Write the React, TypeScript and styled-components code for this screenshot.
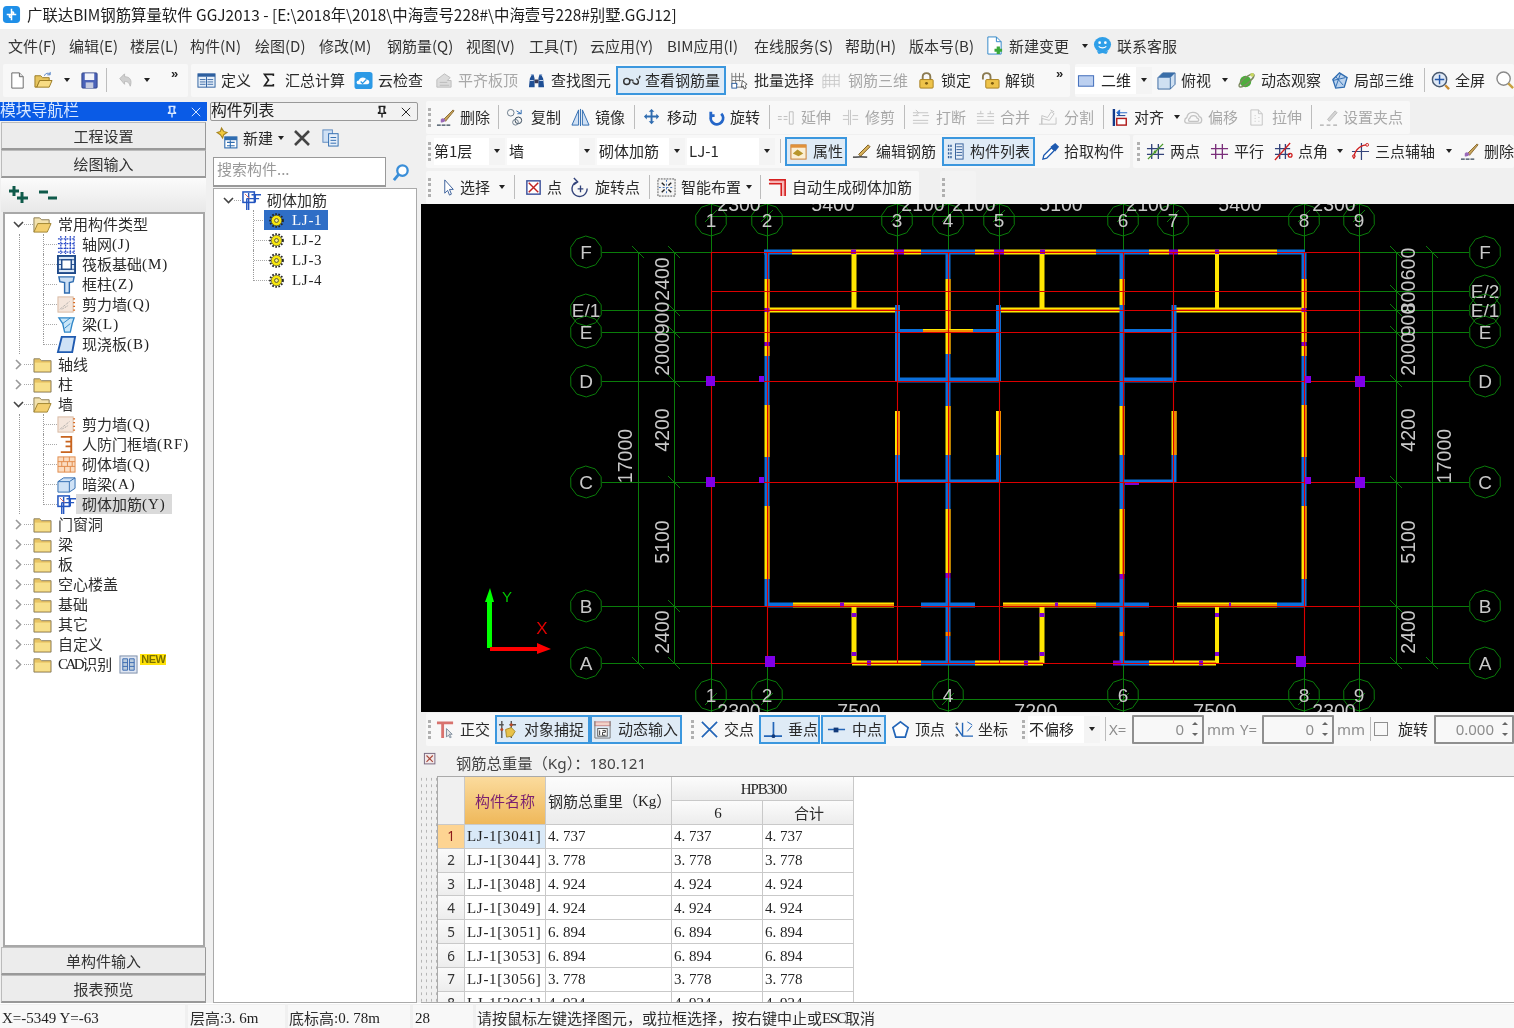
import React from "react";
import styled, { createGlobalStyle } from "styled-components";

const cjk = `"Noto Sans CJK SC", "Noto Sans", sans-serif`;
const serif = `"Liberation Serif", serif`;

const Global = createGlobalStyle`
  html, body { margin: 0; padding: 0; background: #f0f0f0; overflow: hidden; }
  #root { width: 1514px; height: 1028px; }
  * { box-sizing: border-box; }
`;

const Page = styled.div`
  width: 1514px; height: 1028px; display: flex; flex-direction: column; overflow: hidden;
  background: #f0f0f0; color: #262626; font: 15px/20px ${cjk}; filter: blur(0.35px);
`;
const TitleBar = styled.div`
  height: 29px; background: #fff; display: flex; align-items: center; padding: 0 0 1px 2px; gap: 6px;
  font-size: 15.4px; color: #1c1c1c; white-space: nowrap; flex: none;
`;
const MenuBar = styled.div`
  height: 35px; display: flex; align-items: center; padding: 0 0 2px 8px; font-size: 15px; flex: none; color: #333;
`;
const MenuItem = styled.div<{ $w: number; $g?: number }>`
  width: ${(p) => p.$w}px; white-space: nowrap; display: flex; align-items: center; flex: none; gap: ${(p) => p.$g || 0}px;
`;
const TopTools = styled.div`
  height: 37px; display: flex; flex: none; padding-left: 3px;
`;
const Block = styled.div<{ $w?: number; $ml?: number; $flat?: boolean; $grow?: boolean }>`
  height: 33px; display: flex; align-items: center; padding-bottom: 1px;
  flex: ${(p) => (p.$grow ? 1 : "none")};
  width: ${(p) => (p.$w ? `${p.$w}px` : "auto")};
  margin-left: ${(p) => p.$ml || 0}px;
  background: ${(p) => (p.$flat ? "#f3f3f3" : "#f8f8f8")};
  border-radius: 2px; overflow: hidden;
`;
const Tool = styled.div<{ $w: number; $pl?: number; $mr?: number; $on?: boolean; $off?: boolean; $g?: number }>`
  width: ${(p) => p.$w}px; height: ${(p) => (p.$on ? 29 : 28)}px; flex: none; display: flex; align-items: center;
  padding-left: ${(p) => (p.$pl || 0) - (p.$on ? 2 : 0)}px;
  margin-right: ${(p) => p.$mr || 0}px;
  gap: ${(p) => p.$g ?? 5}px; white-space: nowrap;
  color: ${(p) => (p.$off ? "#a8a8a8" : "#2a2a2a")};
  background: ${(p) => (p.$on ? "#dfebf6" : "transparent")};
  border: ${(p) => (p.$on ? "2px solid #3b97de" : "none")};
`;
const Caret = styled.i<{ $cr?: number }>`
  display: block; flex: none; width: 0; height: 0; margin-left: auto; margin-right: ${(p) => p.$cr ?? 6}px;
  border-left: 3.5px solid transparent; border-right: 3.5px solid transparent; border-top: 4px solid #222;
`;
const InlineCaret = styled.i<{ $ml?: number }>`
  display: block; flex: none; width: 0; height: 0; margin-left: ${(p) => p.$ml ?? -1}px;
  border-left: 3.5px solid transparent; border-right: 3.5px solid transparent; border-top: 4px solid #222;
`;
const Sep = styled.div<{ $ml?: number; $mr?: number }>`
  width: 1px; height: 24px; background: #bdbdbd; flex: none;
  margin-left: ${(p) => p.$ml || 0}px; margin-right: ${(p) => p.$mr ?? 7}px;
`;
const Grip = styled.div<{ $ml?: number; $mr?: number }>`
  width: 3px; height: 19px; flex: none; border-left: 3px dotted #b0b0b0;
  margin-left: ${(p) => p.$ml ?? 2}px; margin-right: ${(p) => p.$mr ?? 3}px;
`;
const More = styled.div<{ $ml: number }>`
  margin-left: ${(p) => p.$ml}px; font: bold 13px/13px "Liberation Sans", sans-serif; align-self: flex-start; margin-top: 3px; flex: none;
`;
const Combo = styled.div<{ $w: number; $mr?: number; $pl?: number; $g?: number }>`
  width: ${(p) => p.$w}px; height: 27px; background: #fff; display: flex; align-items: center; flex: none;
  padding-left: ${(p) => p.$pl ?? 1}px; gap: ${(p) => p.$g || 0}px;
  margin-right: ${(p) => p.$mr || 0}px; white-space: nowrap;
`;
const ComboBtn = styled.span`
  width: 16px; height: 27px; background: #f4f4f4; margin-left: auto; display: flex; align-items: center; justify-content: center; flex: none;
`;
const GrayText = styled.div<{ $w: number; $pl?: number }>`
  width: ${(p) => p.$w}px; padding-left: ${(p) => p.$pl || 0}px; color: #8d8d8d; flex: none; font-family: "Noto Sans", sans-serif; font-size: 15px;
`;
const PlainText = styled.div<{ $w: number }>`
  width: ${(p) => p.$w}px; flex: none;
`;
const Spin = styled.div<{ $w: number }>`
  width: ${(p) => p.$w}px; height: 29px; flex: none; border: 2px solid #8f8f8f; border-radius: 1px; background: #f8f8f8;
  display: flex; align-items: center; justify-content: flex-end; padding-right: 4px; gap: 8px; color: #8d8d8d;
  font-family: "Noto Sans", sans-serif; font-size: 15px;
`;
const Arrows = styled.span`
  display: flex; flex-direction: column; gap: 8px;
  &::before, &::after { content: ""; width: 0; height: 0; border-left: 3.5px solid transparent; border-right: 3.5px solid transparent; }
  &::before { border-bottom: 3.5px solid #666; }
  &::after { border-top: 3.5px solid #666; }
`;
const Check = styled.div`
  width: 14px; height: 14px; border: 1px solid #8f8f8f; background: #f8f8f8; flex: none; margin-right: 10px;
`;

const Main = styled.div`
  height: 902px; display: flex; flex: none;
`;
const Left = styled.div`
  width: 207px; flex: none; display: flex; flex-direction: column;
`;
const Middle = styled.div`
  width: 208px; margin-left: 3px; flex: none; display: flex; flex-direction: column;
`;
const Right = styled.div`
  width: 1093px; margin-left: 3px; flex: none; display: flex; flex-direction: column;
`;
const PanelHead = styled.div<{ $active?: boolean }>`
  height: 19px; margin-top: 1px; flex: none; display: flex; align-items: center; padding: 0 4px 3px 0; font-size: 15.8px; line-height: 16px;
  background: ${(p) => (p.$active ? "#0a5be6" : "#f2f2f2")};
  color: ${(p) => (p.$active ? "#d9e8ff" : "#222")};
  border: ${(p) => (p.$active ? "none" : "1px solid #999")};
  border-radius: ${(p) => (p.$active ? 0 : 2)}px;
`;
const HeadIcons = styled.div`
  margin-left: auto; display: flex; align-items: center; gap: 10px; margin-bottom: -3px;
`;
const NavButton = styled.div<{ $first?: boolean }>`
  height: 28px; margin: ${(p) => (p.$first ? 1 : 0)}px 1px 0 1px; flex: none; display: flex; align-items: center; justify-content: center;
  background: #ececec; border: 1px solid #bbb; border-bottom: 2px solid #999; border-right-color: #999; color: #333;
`;
const TreeTools = styled.div`
  height: 34px; flex: none; display: flex; align-items: center; gap: 9px; padding-left: 8px;
  background: linear-gradient(#fbfbfb, #e8e8e8); margin: 0 1px;
`;
const TreeBox = styled.div`
  flex: 1; margin: 0 2px 0 3px; border: 2px solid #a8a8a8; background: #fff; overflow: hidden;
`;
const Row = styled.div<{ $pl?: number }>`
  height: 20px; display: flex; align-items: center; padding-left: ${(p) => p.$pl || 0}px; white-space: nowrap; color: #2e2e2e;
`;
const ChevSlot = styled.span`
  width: 11px; height: 20px; flex: none; display: flex; align-items: center; justify-content: center;
`;
const HDots = styled.span<{ $w: number }>`
  width: ${(p) => p.$w}px; height: 1px; flex: none;
  background: repeating-linear-gradient(90deg, #aaa 0 1px, transparent 1px 2px);
`;
const Kids = styled.div<{ $ml: number; $plain?: boolean }>`
  margin-left: ${(p) => p.$ml}px; border-left: ${(p) => (p.$plain ? "none" : "1px dotted #999")};
`;
const KidRow = styled.div<{ $ml: number }>`
  height: 20px; display: flex; align-items: center; margin-left: ${(p) => p.$ml}px; white-space: nowrap; color: #2e2e2e;
`;
const Branch = styled.span<{ $w: number; $last?: boolean }>`
  width: ${(p) => p.$w}px; height: ${(p) => (p.$last ? 11 : 20)}px; align-self: flex-start; flex: none;
  border-left: 1px dotted #999;
  background: repeating-linear-gradient(90deg, #aaa 0 1px, transparent 1px 2px) 0 10px / 100% 1px no-repeat;
`;
const Label = styled.span<{ $sel?: boolean; $ml?: number }>`
  margin-left: ${(p) => (p.$sel ? 0 : p.$ml ?? 6)}px; padding: 0 ${(p) => (p.$sel ? 6 : 0)}px; display: inline-flex; align-items: center; height: 20px;
  background: ${(p) => (p.$sel ? "#dadada" : "transparent")};
`;
const Ascii = styled.span<{ $ls?: number; $light?: boolean }>`
  font-family: ${serif}; font-size: 15px; letter-spacing: ${(p) => p.$ls ?? 0}px; color: ${(p) => (p.$light ? "#fff" : "#222")};
`;
const Chip = styled.span`
  display: inline-flex; align-items: center; margin-left: 7px;
`;
const NewMark = styled.span`
  background: #ffe20a; font: bold 11px/11px "Liberation Sans", sans-serif; color: #7a7000; padding: 0 1px; margin: -9px 0 0 2px; letter-spacing: -0.5px;
`;
const ListTools = styled.div`
  height: 33px; flex: none; display: flex; align-items: center; padding-left: 6px; gap: 5px; margin-bottom: 3px;
`;
const SearchRow = styled.div`
  height: 31px; flex: none; display: flex; margin: 0 0 0 3px;
`;
const SearchInput = styled.div`
  width: 173px; height: 30px; background: #fff; border: 1px solid #999; border-bottom-width: 2px; color: #999; padding: 1px 3px; font-size: 15px; line-height: 20px;
`;
const SearchBtn = styled.div`
  flex: 1; display: flex; align-items: center; justify-content: center; padding-right: 2px;
`;
const ListBox = styled.div`
  flex: 1; margin: 0 1px 0 3px; background: #fff; border: 1px solid #aaa; padding-top: 1px; overflow: hidden;
`;
const SelBar = styled.span`
  display: flex; align-items: center; height: 20px; background: #2f6ec6; width: 64px; padding-left: 5px; gap: 8px; flex: none;
`;
const ToolRow = styled.div<{ $h: number }>`
  height: ${(p) => p.$h}px; flex: none; display: flex; padding-left: 5px;
`;
const Canvas = styled.div`
  height: 508px; flex: none; background: #000; overflow: hidden;
`;
const CanvasSvg = styled.svg`
  display: block;
`;
const Bottom = styled.div`
  height: 36px; flex: none; display: flex; padding: 1px 0 0 5px;
`;
const SumBar = styled.div`
  height: 28px; flex: none; display: flex; align-items: center; padding-top: 2px; font-size: 15.3px; font-family: "Noto Sans", "Noto Sans CJK SC", sans-serif; color: #444;
`;
const CloseBox = styled.span`
  width: 35px; flex: none; padding-left: 2px; display: flex; margin-top: -8px;
`;
const TableArea = styled.div`
  flex: 1; display: flex; min-height: 0; border-bottom: 1px solid #aaa;
`;
const Handle = styled.div`
  width: 16px; flex: none;
  background-image: radial-gradient(#b5b5b5 0.8px, transparent 1px);
  background-size: 5px 6.5px; background-position: 3px 0;
`;
const TableWrap = styled.div`
  flex: 1; background: #fff; overflow: hidden; border-top: 1px solid #aaa; border-left: 1px solid #aaa;
`;
const Sheet = styled.div`
  display: grid; grid-template-columns: 27px 81px 126px 91px 91px; grid-template-rows: 24px 24px; grid-auto-rows: 23.83px; width: 416px;
`;
const Cell = styled.div<{ $sel?: boolean }>`
  border-right: 1px solid #c9c9c9; border-bottom: 1px solid #c9c9c9; padding-left: 2px; display: flex; align-items: center;
  white-space: nowrap; overflow: hidden; min-height: 0;
  background: ${(p) => (p.$sel ? "#d9e9f8" : "#fff")};
`;
const Corner = styled(Cell)`
  grid-row: span 2; background: #f0f0f0;
`;
const NameHead = styled(Cell)`
  grid-row: span 2; justify-content: center; padding: 0; background: linear-gradient(#fbdb9d, #efb85a); color: #7a1f70;
`;
const Head = styled(Cell)<{ $rows?: number; $cols?: number; $center?: boolean }>`
  grid-row: span ${(p) => p.$rows || 1}; grid-column: span ${(p) => p.$cols || 1};
  justify-content: ${(p) => (p.$center ? "center" : "flex-start")};
  background: linear-gradient(#fcfcfc, #ececec); color: #2e2e2e;
`;
const RowNo = styled(Cell)`
  justify-content: center; padding: 0;
  background: ${(p) => (p.$sel ? "#fdd492" : "linear-gradient(#fafafa,#ededed)")};
  color: ${(p) => (p.$sel ? "#8c1a1a" : "#333")};
  font-family: "Noto Sans", sans-serif; font-size: 13.5px;
`;
const Status = styled.div`
  height: 25px; flex: none; display: flex; border-top: 1px solid #fff; padding-top: 1px; gap: 3px; overflow: hidden; background: #f0f0f0;
`;
const StatusCell = styled.div<{ $w: number; $pl?: number; $grow?: boolean }>`
  width: ${(p) => p.$w}px; flex: ${(p) => (p.$grow ? 1 : "none")}; padding: 2px 0 0 ${(p) => p.$pl ?? 2}px; background: #f8f8f8; white-space: nowrap;
  display: flex; align-items: center; color: #2e2e2e;
`;

/* ---------- icons ---------- */
const ICONS: Record<string, React.ReactNode> = {
  logo: (<><rect x="1" y="1" width="18" height="18" rx="4" fill="#1f8fe8" /><path d="M10 4v12M5 10h10M10 7c3 0 3 3 0 3M10 13c-3 0-3-3 0-3" stroke="#fff" strokeWidth="1.6" fill="none" /></>),
  new: (<><path d="M4 2h8l4 4v12H4z" fill="#fff" stroke="#666" /><path d="M12 2v4h4" fill="#ddd" stroke="#666" /></>),
  open: (<><path d="M1 17V5h6l2 2h7v3H6L3 17z" fill="#e6c45e" stroke="#9a7a22" /><path d="M3 17l3-7h13l-3 7z" fill="#f8dc84" stroke="#9a7a22" /><path d="M11 5c1-3 4-3 6-2M17 1v3h-3" stroke="#4b7cc4" fill="none" /></>),
  save: (<><rect x="2" y="2" width="16" height="16" rx="1" fill="#4a62b8" stroke="#33468a" /><rect x="5" y="2.5" width="10" height="7" fill="#f2f4fa" /><rect x="6" y="12" width="8" height="6" fill="#c5cbe0" /></>),
  undo: (<path d="M4 8l5-5v3c6 0 8 4 6 10-1-4-3-5-6-5v3z" fill="#cfcfcf" stroke="#bbb" />),
  define: (<><rect x="1" y="3" width="18" height="14" fill="#e6eff9" stroke="#2d5f9f" /><rect x="1" y="3" width="18" height="3" fill="#2d5f9f" /><path d="M3 9h6M3 11.5h6M3 14h6M11 9h6M11 11.5h6M11 14h6" stroke="#3d6ba8" /><path d="M10 6v11" stroke="#2d5f9f" /></>),
  sigma: (<path d="M14 5V3H3l5 7-5 7h11v-2" fill="none" stroke="#222" strokeWidth="2" transform="translate(-1 1) scale(.85)" />),
  cloud: (<><rect x="0.5" y="1" width="19" height="18" rx="3" fill="#2c9ae6" /><path d="M5 14c-3 0-3-4 0-4 1-4 7-4 8-1 4 0 4 5 1 5z" fill="#fff" /><path d="M7 11l2 2 4-4" stroke="#2c9ae6" strokeWidth="1.4" fill="none" /></>),
  plat: (<><path d="M3 17V9l8-6 6 4-3 3h4v7z" fill="#dcdcdc" stroke="#bdbdbd" /><path d="M6 12h8M6 15h10" stroke="#bbb" /></>),
  binoc: (<><path d="M2 17l1-9 2-4h2l1 4v9zM12 17V8l1-4h2l2 4 1 9z" fill="#1f4f95" /><path d="M8 9h4v4H8z" fill="#3b3b55" /><path d="M3 10h4M13 10h4" stroke="#cfdcf0" /><path d="M4 4h3M13 4h3" stroke="#7fa0d0" /></>),
  glasses: (<><circle cx="5" cy="11" r="3.2" fill="none" stroke="#333" strokeWidth="1.5" /><path d="M15 8c3 1 3 6 0 6-3 0-4-3-3-3M8 10c1-1 2-1 4 0M18 8l1-3" stroke="#333" strokeWidth="1.5" fill="none" /></>),
  batch: (<><path d="M2 2v15h13M2 6h12M2 10h10M2 14h6M6 2v12M10 2v9M14 2v5" stroke="#777" fill="none" /><rect x="2" y="13" width="5" height="5" fill="#fff" stroke="#2d5f9f" /><path d="M13 10l5 4-2 1 1 3-2 1-1-3-2 1z" fill="#fff" stroke="#555" /></>),
  rebar3d: (<path d="M1 6l3-3v14M8 3v14M13 3v14M18 3v14M1 6h17M1 10h17M1 14h17M4 17l-3 1V6" stroke="#c9c9c9" fill="none" />),
  lock: (<><path d="M6 9V6c0-5 8-5 8 0v3" stroke="#8a7a50" strokeWidth="2" fill="none" /><rect x="3" y="9" width="14" height="9" rx="1" fill="#eec34a" stroke="#a67e1e" /><circle cx="10" cy="13" r="1.5" fill="#7a5a10" /></>),
  unlock: (<><path d="M2 9V6c0-5 8-5 8 0v3" stroke="#8a7a50" strokeWidth="2" fill="none" /><rect x="5" y="9" width="14" height="9" rx="1" fill="#eec34a" stroke="#a67e1e" /><circle cx="12" cy="13" r="1.5" fill="#7a5a10" /></>),
  view2d: (<rect x="1.5" y="5" width="16" height="11" fill="#bcd0f0" stroke="#3a68b8" />),
  cube: (<><path d="M1 7l5-5h13v12l-5 5H1z" fill="#cfe0f2" stroke="#3a68a0" /><path d="M1 7h13l5-5H6z" fill="#3a6ea8" /><path d="M14 7v12" stroke="#3a68a0" /></>),
  orbit: (<><circle cx="9" cy="11" r="6" fill="#4cae3c" /><ellipse cx="10" cy="10" rx="10" ry="3" transform="rotate(-40 10 10)" fill="none" stroke="#7c8a60" strokeWidth="1.5" /><circle cx="16" cy="4" r="2" fill="#c8d860" /></>),
  local3d: (<><path d="M3 9l7-7 8 5-3 10-9 1z" fill="#b9d2ee" stroke="#2f6cb0" strokeWidth="1.4" /><path d="M6 6l8 9M11 3l-5 14M3 10l13-3" stroke="#2f6cb0" /></>),
  zoomfit: (<><circle cx="9" cy="9" r="7.5" fill="#dfe9f6" stroke="#4a5a70" strokeWidth="1.5" /><path d="M9 4v10M4 9h10" stroke="#2356a8" strokeWidth="1.5" /><path d="M15 15l4 4" stroke="#c88a30" strokeWidth="2.5" /></>),
  zoom: (<><circle cx="8" cy="8" r="7" fill="#fff" stroke="#8a8a8a" strokeWidth="1.5" /><path d="M13 13l5 5" stroke="#c8a040" strokeWidth="2.5" /></>),
  brush: (<><path d="M8 12L18 2l1 1L10 14z" fill="#c8a45a" stroke="#8a6a30" /><path d="M5 12c2-2 4-1 5 1-1 2-4 3-5 2z" fill="#9a6ab8" /><path d="M1 18h14" stroke="#345" strokeWidth="1.5" strokeDasharray="4 1" /></>),
  copy: (<><circle cx="5" cy="5" r="3.5" fill="none" stroke="#6a7a8a" /><circle cx="13" cy="13" r="3.5" fill="none" stroke="#345" /><circle cx="10" cy="15" r="3" fill="none" stroke="#6a7a8a" /><path d="M11 3l5 3M16 2v4h-4" stroke="#2f6cb0" fill="none" /></>),
  mirror: (<path d="M8 2v16H1zM12 2v16h7zM10 1v18" fill="#cfe0f4" stroke="#2f6cb0" />),
  move: (<path d="M9 1l3 3h-2v4h4V6l3 3-3 3v-2h-4v4h2l-3 3-3-3h2v-4H4v2L1 9l3-3v2h4V4H6z" fill="#2f6cb0" />),
  rotate: (<path d="M4 4v4h4M15 6A6.5 6.5 0 1 1 4.5 8" fill="none" stroke="#2466c8" strokeWidth="3" />),
  extend: (<path d="M1 9h4M1 12h4M7 9h4M7 12h4M13 4v13M17 4v13M13 4h4M13 17h4" stroke="#bdbdbd" fill="none" />),
  trim: (<path d="M2 8h6M2 12h6M12 8h6M12 12h6M8 2v16M10 2v16" stroke="#c4c4c4" fill="none" />),
  break: (<path d="M1 5h16M1 8h6M11 8h7M1 13h16M1 16h16M4 2l3 3-3 3" stroke="#c4c4c4" fill="none" />),
  merge: (<path d="M1 6h7M12 6h7M1 9h7M12 9h7M1 13h18M1 16h18M5 3v3M15 3v3" stroke="#c4c4c4" fill="none" />),
  split: (<path d="M1 17h18V10M4 17V8l6 2 4-6 3 2-5 7-8-2zM13 2l4 2" stroke="#c4c4c4" fill="none" />),
  align: (<><path d="M2 1v18" stroke="#123a8a" strokeWidth="2.5" /><path d="M7 5h9M5 5l3-3v6z" stroke="#2466c8" fill="#2466c8" /><rect x="5" y="11" width="10" height="7" fill="#fff" stroke="#b01a1a" strokeWidth="1.5" /><path d="M5 8h9" stroke="#123a8a" /></>),
  offset: (<path d="M3 16c-3 0-3-5 0-6 1-7 11-7 13-1 4 1 3 7 0 7zM6 14c-2 0-1-3 0-3 1-4 7-4 8 0 2 0 2 3 0 3z" fill="none" stroke="#c4c4c4" strokeWidth="1.4" />),
  stretch: (<path d="M3 2h8l4 4v12H3zM11 2v4h4M7 8h1M7 11h1M7 14h1M11 10h1M11 14h1" stroke="#c4c4c4" fill="none" />),
  setgrip: (<><path d="M9 12l8-9 2 2-8 9z" fill="#d4d4d4" stroke="#bbb" /><path d="M1 18h4M8 18h4M15 18h4" stroke="#aaa" strokeWidth="1.5" /></>),
  prop: (<><rect x="2" y="3" width="16" height="15" fill="#fbefd5" stroke="#c8782a" /><rect x="2" y="3" width="16" height="3" fill="#e0913a" /><path d="M4 12l5-4 6 4-5 3z" fill="#b8962c" /></>),
  edit: (<><path d="M7 13L17 3l2 2L9 15z" fill="#d8b25a" stroke="#7a5a20" /><path d="M1 16c3 0 7-1 15 0" stroke="#222" strokeWidth="1.4" fill="none" /></>),
  list: (<><rect x="10" y="2" width="8" height="16" fill="#e6eff9" stroke="#345f99" /><path d="M11 5h6M11 8h6M11 11h6M11 14h6" stroke="#345f99" /><path d="M2 4h4M2 8h4M2 12h4M2 16h4" stroke="#345f99" strokeWidth="2.4" strokeDasharray="1.5 1" /></>),
  dropper: (<><path d="M2 18l1-4 8-8 3 3-8 8z" fill="#fff" stroke="#1e5ab0" strokeWidth="1.4" /><path d="M10 5l5-4 4 4-4 5z" fill="#1e5ab0" /></>),
  two: (<><path d="M6 2v16M13 2v16M1 7h18M1 13h18" stroke="#33437a" strokeWidth="1.4" /><path d="M2 18L18 2" stroke="#4a9a2a" strokeWidth="1.4" /><circle cx="9.5" cy="10.5" r="1.5" fill="#4a9a2a" /></>),
  parallel: (<path d="M6 2v16M13 2v16M1 7h18M1 13h18" stroke="#7a2e7a" strokeWidth="1.4" />),
  angle: (<><path d="M6 2v16M12 2v16M1 7h16M1 13h16" stroke="#33437a" strokeWidth="1.4" /><path d="M1 19L17 1" stroke="#d02020" strokeWidth="1.4" /><circle cx="17" cy="14" r="2" fill="none" stroke="#d02020" strokeWidth="1.4" /></>),
  three: (<><path d="M11 1v18M1 10h18" stroke="#33437a" strokeWidth="1.3" /><path d="M3 18c0-8 5-14 13-15" stroke="#d02020" strokeWidth="1.3" fill="none" /><circle cx="3" cy="15" r="1.5" fill="none" stroke="#d02020" /><circle cx="17" cy="3" r="1.5" fill="none" stroke="#d02020" /></>),
  cursor: (<path d="M5 2v14l3-3 2 5 2-1-2-5h4z" fill="#fff" stroke="#3a5f9a" />),
  point: (<><rect x="3" y="3" width="14" height="14" fill="#fff" stroke="#3a4f9a" strokeWidth="1.5" /><path d="M5 5l10 10M15 5L5 15" stroke="#c02020" strokeWidth="1.5" /></>),
  rotpt: (<><path d="M6 4A8 8 0 1 0 17 11" fill="none" stroke="#33437a" strokeWidth="1.5" /><path d="M3 0l4 4-4 3" fill="none" stroke="#33437a" strokeWidth="1.5" /><path d="M10 8v7M7 11.5h6" stroke="#33437a" strokeWidth="1.4" /></>),
  smart: (<><path d="M1 1h18v18H1z" fill="#f4f4f4" stroke="#555" strokeDasharray="2 1" /><path d="M10 2v16M2 10h16" stroke="#3a6ab0" strokeDasharray="2 2" /><path d="M5 5l3 3M15 5l-3 3M5 15l3-3M15 15l-3-3" stroke="#222" strokeWidth="1.5" /></>),
  auto: (<><path d="M1 2h17v17M1 6h13v13" fill="none" stroke="#d61f1f" strokeWidth="1.8" /><path d="M2 4h14v15" fill="none" stroke="#f8b0b0" strokeWidth="1.6" /></>),
  ortho: (<><path d="M1 3h17M7 3v16" stroke="#d8736e" strokeWidth="3" /><path d="M11 9v9l2-2 2 3 1-1-2-3h3z" fill="#e8e8e8" stroke="#7a8a9a" /></>),
  snap: (<><path d="M4 1v18M14 1v18M1 5h5M12 5h7" stroke="#555" strokeWidth="1.5" /><circle cx="4" cy="10" r="1.6" fill="#b84a2a" /><circle cx="14" cy="5" r="1.6" fill="#b84a2a" /><path d="M8 10l6-2 4 4-3 5-6 1z" fill="#e8c24a" stroke="#a68a2a" /></>),
  dyn: (<><rect x="2" y="2" width="16" height="4" fill="#f2d2c8" stroke="#c88" /><path d="M2 1v18M18 1v18M2 19h16" stroke="#777" /><rect x="5" y="9" width="10" height="8" fill="#fff" stroke="#555" /><path d="M7 11v5M10 11h3v2h-3v3h3" stroke="#333" fill="none" /></>),
  cross: (<path d="M2 2l16 16M18 2L2 18" stroke="#2466b8" strokeWidth="1.8" />),
  perp: (<><path d="M1 17h19M11 2v15" stroke="#2466b8" strokeWidth="1.8" /><circle cx="11" cy="17" r="2" fill="#123a7a" /></>),
  mid: (<><path d="M1 10h18" stroke="#2466b8" strokeWidth="1.8" /><rect x="7" y="8" width="5" height="5" fill="#123a7a" /></>),
  vertex: (<path d="M10 2l8 6-3 10H5L2 8z" fill="#fff" stroke="#2466b8" strokeWidth="1.8" />),
  coord: (<><path d="M9 3v14h11M9 17L2 7" stroke="#2466b8" strokeWidth="1.5" fill="none" /><path d="M14 2l5 3M14 12l5-6" stroke="#2466b8" /><circle cx="3" cy="4" r="1" fill="none" stroke="#333" /><circle cx="3" cy="16" r="1" fill="none" stroke="#333" /></>),
  plusplus: (<path d="M5 1v10M0 6h10M13 7v11M8 13h11" stroke="#0f5a4a" strokeWidth="3" />),
  minusminus: (<path d="M1 7h9M10 13h9" stroke="#0f5a4a" strokeWidth="3" />),
  pin: (<path d="M6 2h8v2h-1v6l2 1v1H5v-1l2-1V4H6zM10 12v6" fill="none" stroke="currentColor" strokeWidth="2" />),
  close: (<path d="M4 4l12 12M16 4L4 16" stroke="currentColor" strokeWidth="1.4" />),
  newitem: (<><path d="M1 5l3-1 1-3 2 3 3 1-3 2-1 3-2-3z" fill="#f2ca3e" stroke="#a88620" /><rect x="8" y="9" width="11" height="10" fill="#fff" stroke="#2f6cb0" /><rect x="8" y="9" width="11" height="3" fill="#2f6cb0" /><path d="M10 14h7M10 17h7M13 12v7" stroke="#2f6cb0" /></>),
  del: (<path d="M3 3l14 14M17 3L3 17" stroke="#444" strokeWidth="2.6" />),
  dup: (<><rect x="2" y="2" width="10" height="13" fill="#cfe0f4" stroke="#5e8ac0" /><rect x="8" y="6" width="10" height="13" fill="#e6eff9" stroke="#2f6cb0" /><path d="M10 10h6M10 13h6M10 16h6" stroke="#2f6cb0" /></>),
  search: (<><circle cx="11" cy="8" r="5.5" fill="#fff" stroke="#3a8ed8" strokeWidth="2.4" /><path d="M7 12l-5 6" stroke="#3a8ed8" strokeWidth="3" /></>),
  folder: (<><path d="M1 4h6l2 2h10v12H1z" fill="#e8c463" stroke="#8a8060" /><path d="M2 8h16v9H2z" fill="#f7e08a" /></>),
  folderOpen: (<><path d="M1 18V3h6l2 2h8v4" fill="#f3e3b0" stroke="#8a7a50" /><path d="M1 18l4-9h14l-4 9z" fill="#f3cf6f" stroke="#a08430" /></>),
  axis: (<path d="M1 4h18M1 9h18M1 14h18M1 18h18M4 1v19M9 1v19M14 1v19M18 1v19" stroke="#2a4ac8" fill="none" strokeWidth="1.3" strokeDasharray="2 1" />),
  raft: (<><rect x="1" y="1" width="18" height="18" fill="#dce8f6" stroke="#1f4a8a" strokeWidth="2" /><rect x="5" y="5" width="10" height="10" fill="#fff" stroke="#1f4a8a" strokeWidth="1.5" /><path d="M1 5h4M1 10h4M1 15h4M15 5h4M15 10h4M15 15h4" stroke="#1f4a8a" /></>),
  col: (<path d="M2 2h16l-1 5-4 1v11H8V8L3 7z" fill="#cde0f4" stroke="#2f6cb0" strokeWidth="1.5" />),
  shear: (<><rect x="1" y="2" width="16" height="16" fill="#f4e6dc" stroke="#d8b8a0" /><path d="M3 15l10-8M5 15l7-4" stroke="#9a9a9a" strokeDasharray="1 1" /><path d="M17 4h2M17 8h2M17 12h2M17 16h2" stroke="#d86a20" strokeWidth="1.4" /></>),
  beam: (<><path d="M2 3h16l-2 6-2 9H8L6 9z" fill="#c8e6f8" stroke="#2f86c8" strokeWidth="1.4" /><path d="M6 9l8-6M8 14l6-5" stroke="#2f86c8" /></>),
  slab: (<path d="M5 2h14l-3 16H1z" fill="#cfe2f6" stroke="#1f5ab0" strokeWidth="2" />),
  door: (<path d="M4 2h11v16H4M15 7H9M15 12H9" fill="#fff" stroke="#c8641e" strokeWidth="2" />),
  brick: (<><rect x="1" y="2" width="18" height="16" fill="#fbdcc0" stroke="#e08a4a" /><path d="M1 7h18M1 12h18M7 2v5M13 2v5M5 7v5M11 7v5M16 7v5M8 12v6M14 12v6" stroke="#e08a4a" /></>),
  hbeam: (<><path d="M1 7l6-4h12v11l-6 4H1z" fill="#cfe2f6" stroke="#2f6cb0" /><path d="M1 7h12l6-4M13 7v11" fill="none" stroke="#2f6cb0" /></>),
  rebar: (<><rect x="1" y="1" width="12" height="11" fill="#fff" stroke="#2456c0" strokeWidth="1.6" /><path d="M10 4h10M5 8h13M7 2v18M14 4v8M5 20V8" stroke="#2456c0" strokeWidth="1.5" /><path d="M3 3l5 5" stroke="#d06060" /></>),
  gear: (<><circle cx="10" cy="10" r="8.6" fill="none" stroke="#222" strokeWidth="2.4" strokeDasharray="2.2 2" /><circle cx="10" cy="10" r="7" fill="#f6e60e" stroke="#3a3a10" strokeWidth="0.8" /><circle cx="10" cy="10" r="2.6" fill="#f8f080" stroke="#333" /></>),
  cadbox: (<><rect x="1" y="1" width="18" height="18" fill="#dfe6f2" stroke="#7a8ca8" /><path d="M4 4h5v12H4zM11 4h5v12h-5zM4 8h5M4 12h5M11 8h5M11 12h5" fill="#bcd" stroke="#3a6ab0" /></>),
  doc: (<><path d="M3 1h9l5 5v13H3z" fill="#fff" stroke="#2f86c8" /><path d="M12 1v5h5" fill="none" stroke="#2f86c8" /><path d="M14 11v8M10 15h8" stroke="#3aa83a" strokeWidth="3.4" /></>),
  service: (<><ellipse cx="10" cy="9" rx="9" ry="8" fill="#2f9fe8" /><path d="M4 16l2 3 4-1 4 1 2-3" fill="#2f9fe8" /><circle cx="7" cy="7" r="1.4" fill="#fff" /><circle cx="13" cy="7" r="1.4" fill="#fff" /><path d="M6 11c2 2 6 2 8 0" stroke="#fff" strokeWidth="1.2" fill="none" /></>),
  xclose: (<><rect x="2" y="2" width="15" height="15" fill="#f3e9ea" stroke="#7a6a80" strokeWidth="1.4" /><path d="M5 5l9 9M14 5l-9 9" stroke="#a8483a" strokeWidth="1.6" /></>),
};

const Glyph = styled.svg`
  display: block; flex: none; overflow: visible;
`;
const Ic = ({ n, s = 19 }: { n: string; s?: number }) => (
  <Glyph width={s} height={s} viewBox="0 0 20 20">{ICONS[n]}</Glyph>
);

type T = { i?: string; t?: string; w: number; pl?: number; mr?: number; on?: boolean; off?: boolean; g?: number; c?: boolean; cr?: number };
const Tools = ({ items }: { items: T[] }) => (
  <>
    {items.map((x, k) => (
      <Tool key={k} $w={x.w} $pl={x.pl} $mr={x.mr} $on={x.on} $off={x.off} $g={x.g}>
        {x.i && <Ic n={x.i} />}
        {x.t && <span>{x.t}</span>}
        {x.c && <Caret $cr={x.cr} />}
      </Tool>
    ))}
  </>
);
const Pick = ({ t, w, mr, pl }: { t: string; w: number; mr?: number; pl?: number }) => (
  <Combo $w={w} $mr={mr} $pl={pl}>
    {t}
    <ComboBtn><InlineCaret /></ComboBtn>
  </Combo>
);

/* ---------- drawing ---------- */
const AX = [711, 767, 897, 948, 999, 1123, 1173, 1304, 1359];
const HY = [252, 291, 310, 332, 381, 482, 606, 663];
const GREEN = "#0a7c0a";
const RED = "#dc0000";
const GREY = "#c9c9c9";
const BLUE = "#0b70dc";
const YEL = "#ffe600";
const PUR = "#8200d0";
const sans = '"Liberation Sans", sans-serif';

const Bubble = ({ x, y, t }: { x: number; y: number; t: string }) => {
  const pts = Array.from({ length: 10 }, (_, i) => {
    const a = (Math.PI * 2 * i) / 10 + 0.3;
    return `${x + 16 * Math.cos(a)},${y + 16 * Math.sin(a)}`;
  }).join(" ");
  return (
    <>
      <polygon points={pts} fill="none" stroke={GREEN} />
      <text x={x} y={y + 7} fontFamily={sans} fontSize={19} fill={GREY} textAnchor="middle">{t}</text>
    </>
  );
};
const Dim = ({ x, y, t }: { x: number; y: number; t: string }) => (
  <text transform={`rotate(-90 ${x} ${y})`} x={x} y={y + 7} fontFamily={sans} fontSize="19.5" fill={GREY} textAnchor="middle">{t}</text>
);
const Top = ({ x, y, t }: { x: number; y: number; t: string }) => (
  <text x={x} y={y} fontFamily={sans} fontSize="19.5" fill={GREY} textAnchor="middle">{t}</text>
);
const Tick = ({ x, y, up }: { x: number; y: number; up?: boolean }) => (
  <line x1={x - 6} y1={up ? y + 6 : y - 6} x2={x + 6} y2={up ? y - 6 : y + 6} stroke={GREEN} />
);

type S = [number, number, string];
const wallH = (y: number, segs: S[], w = 5) =>
  segs.map(([a, b, c], i) => (
    <g key={`h${y}${i}${a}`}>
      <rect x={a} y={y - w / 2} width={b - a} height={w} fill={c} />
      {c === YEL && <rect x={a} y={y - 1} width={b - a} height={2} fill="#f08c00" />}
    </g>
  ));
const wallV = (x: number, segs: S[], w = 5, core = true) =>
  segs.map(([a, b, c], i) => (
    <g key={`v${x}${i}${a}`}>
      <rect x={x - w / 2} y={a} width={w} height={b - a} fill={c} />
      {core && c === YEL && <rect x={x} y={a} width={w / 2} height={b - a} fill="#f08c00" />}
    </g>
  ));

const mainWall = (): S[] => [[252, 279, BLUE], [279, 308, YEL], [308, 312, PUR], [312, 342, YEL], [342, 346, PUR], [346, 356, YEL], [356, 405, BLUE], [405, 457, YEL], [457, 506, BLUE], [506, 579, YEL], [579, 606, BLUE]];
const midWall = (): S[] => [[252, 279, BLUE], [279, 354, YEL], [354, 406, BLUE], [406, 455, YEL], [455, 509, BLUE], [509, 573, YEL], [573, 578, PUR], [578, 632, BLUE], [632, 636, "#f08c00"], [636, 663, BLUE]];
const midWall2 = (): S[] => [[252, 279, BLUE], [279, 305, YEL], [305, 406, BLUE], [406, 455, YEL], [455, 509, BLUE], [509, 574, YEL], [574, 579, PUR], [579, 632, BLUE], [632, 636, "#f08c00"], [636, 663, BLUE]];
const SQ: [number, number, number][] = [[706, 376, 9], [759, 376, 5], [706, 477, 9], [759, 477, 5], [1305, 376, 6], [1355, 376, 10], [1305, 477, 6], [1355, 477, 10], [765, 656, 10], [1296, 656, 10]];

const Plan = () => (
  <CanvasSvg width={1093} height={508} viewBox="421 204 1093 508">
    <g stroke={GREEN} fill="none">
      {AX.map((x) => <line key={x} x1={x + 0.5} y1={204} x2={x + 0.5} y2={252} />)}
      {[711, 767, 948, 1123, 1304, 1359].map((x) => <line key={x} x1={x + 0.5} y1={663} x2={x + 0.5} y2={712} />)}
      <line x1={711} y1={216.5} x2={1359} y2={216.5} />
      <line x1={711} y1={699.5} x2={1359} y2={699.5} />
      {[252, 310, 332, 381, 482, 606, 663].map((y) => <line key={y} x1={602} y1={y + 0.5} x2={711} y2={y + 0.5} />)}
      {HY.map((y) => <line key={y} x1={1359} y1={y + 0.5} x2={1469} y2={y + 0.5} />)}
      {[638, 674, 1396, 1432].map((x) => <line key={x} x1={x + 0.5} y1={252} x2={x + 0.5} y2={663} />)}
    </g>
    {[252, 663].map((y) => <Tick key={y} x={638} y={y} />)}
    {[252, 310, 332, 381, 482, 606, 663].map((y) => <Tick key={y} x={674} y={y} />)}
    {HY.map((y) => <Tick key={y} x={1396} y={y} />)}
    {[252, 663].map((y) => <Tick key={y} x={1432} y={y} />)}
    {AX.map((x) => <Tick key={x} x={x} y={216} up />)}
    {[711, 767, 948, 1123, 1304, 1359].map((x) => <Tick key={x} x={x} y={699} up />)}

    {wallH(252, [[764, 792, BLUE], [792, 894, YEL], [851, 856, PUR], [894, 904, PUR], [904, 921, YEL], [921, 975, BLUE], [975, 994, YEL], [994, 1004, PUR], [1004, 1096, YEL], [1040, 1045, PUR], [1096, 1149, BLUE], [1149, 1169, YEL], [1169, 1178, PUR], [1178, 1277, YEL], [1215, 1219, PUR], [1277, 1305, BLUE]])}
    {wallV(854, [[254, 308, YEL]], 5, false)}
    {wallV(1042, [[254, 308, YEL]], 5, false)}
    {wallV(1217, [[254, 308, YEL]], 4, false)}
    {wallH(310, [[769, 895, YEL], [1001, 1120, YEL], [1176, 1304, YEL]])}
    {wallV(767, mainWall())}
    {wallV(1304, mainWall())}
    {wallV(948, midWall())}
    {wallV(1122, midWall2())}
    {wallV(897.5, [[305, 381, BLUE], [411, 455, YEL], [455, 482, BLUE]])}
    {wallV(998.5, [[305, 381, BLUE], [411, 455, YEL], [455, 482, BLUE]])}
    {wallV(1174, [[305, 381, BLUE], [411, 455, YEL], [455, 482, BLUE]])}
    {wallH(331, [[897, 923, BLUE], [923, 973, YEL], [973, 999, BLUE], [1122, 1174, BLUE]], 4)}
    {wallH(380, [[897, 999, BLUE], [1122, 1176, BLUE]])}
    {wallH(481, [[897, 999, BLUE], [1122, 1174, BLUE]], 3)}
    <rect x={1125} y={482} width={14} height={3} fill={PUR} />
    {wallH(605, [[767, 793, BLUE], [793, 894, YEL], [840, 844, PUR], [921, 975, BLUE], [1003, 1096, YEL], [1055, 1058, PUR], [1096, 1149, BLUE], [1177, 1277, YEL], [1229, 1231, PUR], [1277, 1305, BLUE]])}
    {[[854, 5], [1042, 5], [1217, 4]].map(([x, w]) => (
      <g key={x}>
        {wallV(x, [[607, 663, YEL], [613, 617, PUR], [652, 656, PUR]], w, false)}
      </g>
    ))}
    {wallH(663, [[852, 921, YEL], [867, 871, PUR], [921, 975, BLUE], [975, 1043, YEL], [1024, 1028, PUR], [1113, 1121, PUR], [1121, 1149, BLUE], [1149, 1216, YEL], [1199, 1203, PUR]])}

    <g stroke={RED} strokeWidth="1.1">
      {HY.map((y) => <line key={y} x1={711} y1={y + 0.5} x2={1359} y2={y + 0.5} />)}
      {AX.map((x) => <line key={x} x1={x + 0.5} y1={252} x2={x + 0.5} y2={663} />)}
    </g>
    {SQ.map(([x, y, s], i) => <rect key={i} x={x} y={y} width={s} height={s + 1} fill="#7f00e8" />)}

    {AX.map((x, i) => <Bubble key={x} x={x} y={220} t={String(i + 1)} />)}
    {[[711, "1"], [767, "2"], [948, "4"], [1123, "6"], [1304, "8"], [1359, "9"]].map(([x, t]) => <Bubble key={x as number} x={x as number} y={695} t={t as string} />)}
    {[[252, "F"], [310, "E/1"], [332, "E"], [381, "D"], [482, "C"], [606, "B"], [663, "A"]].map(([y, t]) => <Bubble key={y as number} x={586} y={y as number} t={t as string} />)}
    {[[252, "F"], [291, "E/2"], [310, "E/1"], [332, "E"], [381, "D"], [482, "C"], [606, "B"], [663, "A"]].map(([y, t]) => <Bubble key={y as number} x={1485} y={y as number} t={t as string} />)}

    {[[739, "2300"], [833, "5400"], [923, "2100"], [974, "2100"], [1061, "5100"], [1148, "2100"], [1240, "5400"], [1334, "2300"]].map(([x, t], i) => <Top key={i} x={x as number} y={211} t={t as string} />)}
    {[[739, "2300"], [859, "7500"], [1036, "7200"], [1215, "7500"], [1334, "2300"]].map(([x, t], i) => <Top key={i} x={x as number} y={718} t={t as string} />)}
    {[[279, "2400"], [318, "900"], [354, "2000"], [430, "4200"], [542, "5100"], [632, "2400"]].map(([y, t], i) => <Dim key={i} x={662} y={y as number} t={t as string} />)}
    {[[264, "600"], [297, "800"], [320, "900"], [354, "2000"], [430, "4200"], [542, "5100"], [632, "2400"]].map(([y, t], i) => <Dim key={i} x={1408} y={y as number} t={t as string} />)}
    <Dim x={625} y={456} t="17000" />
    <Dim x={1444} y={456} t="17000" />

    <path d="M490 588l4 14h-2v46h-5v-46h-2z" fill="#00ff00" />
    <path d="M551 649l-14 5v-3h-47v-4h47v-4z" fill="#ff0000" />
    <text x={507} y={602} fontFamily={sans} fontSize="15" fill="#00c800" textAnchor="middle">Y</text>
    <text x={542} y={634} fontFamily={sans} fontSize="17" fill="#e00000" textAnchor="middle">X</text>
  </CanvasSvg>
);

const Folder = ({ open }: { open?: boolean }) => <Ic n={open ? "folderOpen" : "folder"} />;
const Chev = ({ open }: { open?: boolean }) => (
  <Glyph width={11} height={11} viewBox="0 0 11 11">
    <path d={open ? "M1 3l4.5 4.5L10 3" : "M3 1l4.5 4.5L3 10"} fill="none" stroke={open ? "#444" : "#999"} strokeWidth="1.6" />
  </Glyph>
);
const Kid = ({ i, t, a, last, sel }: { i: string; t: string; a: string; last?: boolean; sel?: boolean }) => (
  <KidRow $ml={23}>
    <Branch $w={14} $last={last} />
    <Ic n={i} />
    <Label $sel={sel}>{t}<Ascii $ls={1}>{a}</Ascii></Label>
  </KidRow>
);
const Node = ({ t, open, a, extra }: { t: string; open?: boolean; a?: string; extra?: boolean }) => (
  <Row $pl={8}>
    <ChevSlot><Chev open={open} /></ChevSlot>
    <HDots $w={9} />
    <Folder open={open} />
    <Label>{a && <Ascii $ls={-2.5}>{a}</Ascii>}{t}</Label>
    {extra && <Chip><Ic n="cadbox" /><NewMark>NEW</NewMark></Chip>}
  </Row>
);

const NAMES = ["[3041]", "[3044]", "[3048]", "[3049]", "[3051]", "[3053]", "[3056]", "[3061]"];
const VALS = ["4. 737", "3. 778", "4. 924", "4. 924", "6. 894", "6. 894", "3. 778", "4. 924"];

export default function App() {
  return (
    <Page>
      <Global />
      <TitleBar>
        <Ic n="logo" />
        <span>广联达BIM钢筋算量软件 GGJ2013 - [E:\2018年\2018\中海壹号228#\中海壹号228#别墅.GGJ12]</span>
      </TitleBar>
      <MenuBar>
        {([["文件(F)", 61], ["编辑(E)", 61], ["楼层(L)", 60], ["构件(N)", 65], ["绘图(D)", 64], ["修改(M)", 68], ["钢筋量(Q)", 79], ["视图(V)", 63], ["工具(T)", 61], ["云应用(Y)", 77], ["BIM应用(I)", 87], ["在线服务(S)", 91], ["帮助(H)", 64], ["版本号(B)", 76]] as [string, number][]).map(([t, w]) => (
          <MenuItem key={t} $w={w}>{t}</MenuItem>
        ))}
        <MenuItem $w={108} $g={5}><Ic n="doc" />新建变更<InlineCaret $ml={8} /></MenuItem>
        <MenuItem $w={90} $g={5}><Ic n="service" />联系客服</MenuItem>
      </MenuBar>
      <TopTools>
        <Block $w={185}>
          <Tools items={[{ i: "new", w: 31, pl: 5 }, { i: "open", w: 46, c: true, cr: 10 }, { i: "save", w: 26 }]} />
          <Sep $mr={9} />
          <Tools items={[{ i: "undo", w: 40, off: true, c: true, cr: 6 }]} />
          <More $ml={15}>»</More>
        </Block>
        <Block $w={879} $ml={3}>
          <Tools items={[
            { i: "define", t: "定义", w: 72, pl: 6 },
            { i: "sigma", t: "汇总计算", w: 91, g: 3 },
            { i: "cloud", t: "云检查", w: 80 },
            { i: "plat", t: "平齐板顶", w: 93, off: true },
            { i: "binoc", t: "查找图元", w: 89 },
            { i: "glasses", t: "查看钢筋量", w: 110, pl: 6, mr: 4, on: true, g: 4 },
            { i: "batch", t: "批量选择", w: 92 },
            { i: "rebar3d", t: "钢筋三维", w: 95, off: true, g: 7 },
            { i: "lock", t: "锁定", w: 64 },
            { i: "unlock", t: "解锁", w: 64 },
          ]} />
          <More $ml={11}>»</More>
        </Block>
        <Block $ml={5} $grow>
          <Combo $w={77} $mr={5} $pl={2} $g={5}><Ic n="view2d" />二维<ComboBtn><InlineCaret /></ComboBtn></Combo>
          <Tools items={[
            { i: "cube", t: "俯视", w: 80, c: true, cr: 9 },
            { i: "orbit", t: "动态观察", w: 93 },
            { i: "local3d", t: "局部三维", w: 94 },
          ]} />
          <Sep $mr={6} />
          <Tools items={[{ i: "zoomfit", t: "全屏", w: 65 }, { i: "zoom", w: 20 }]} />
        </Block>
      </TopTools>
      <Main>
        <Left>
          <PanelHead $active>
            模块导航栏
            <HeadIcons><Ic n="pin" s={14} /><Ic n="close" s={14} /></HeadIcons>
          </PanelHead>
          <NavButton $first>工程设置</NavButton>
          <NavButton>绘图输入</NavButton>
          <TreeTools><Ic n="plusplus" s={20} /><Ic n="minusminus" s={20} /></TreeTools>
          <TreeBox>
            <Node t="常用构件类型" open />
            <Kids $ml={14}>
              <Kid i="axis" t="轴网" a="(J)" />
              <Kid i="raft" t="筏板基础" a="(M)" />
              <Kid i="col" t="框柱" a="(Z)" />
              <Kid i="shear" t="剪力墙" a="(Q)" />
              <Kid i="beam" t="梁" a="(L)" />
              <Kid i="slab" t="现浇板" a="(B)" last />
            </Kids>
            <Node t="轴线" />
            <Node t="柱" />
            <Node t="墙" open />
            <Kids $ml={14}>
              <Kid i="shear" t="剪力墙" a="(Q)" />
              <Kid i="door" t="人防门框墙" a="(RF)" />
              <Kid i="brick" t="砌体墙" a="(Q)" />
              <Kid i="hbeam" t="暗梁" a="(A)" />
              <Kid i="rebar" t="砌体加筋" a="(Y)" last sel />
            </Kids>
            <Node t="门窗洞" />
            <Node t="梁" />
            <Node t="板" />
            <Node t="空心楼盖" />
            <Node t="基础" />
            <Node t="其它" />
            <Node t="自定义" />
            <Node t="识别" a="CAD" extra />
          </TreeBox>
          <NavButton>单构件输入</NavButton>
          <NavButton>报表预览</NavButton>
        </Left>
        <Middle>
          <PanelHead>
            构件列表
            <HeadIcons><Ic n="pin" s={14} /><Ic n="close" s={14} /></HeadIcons>
          </PanelHead>
          <ListTools>
            <Ic n="newitem" s={22} />
            <Tool $w={44} $g={5}><span>新建</span><InlineCaret $ml={0} /></Tool>
            <Ic n="del" s={20} />
            <Tool $w={23} $pl={4}><Ic n="dup" /></Tool>
          </ListTools>
          <SearchRow>
            <SearchInput>搜索构件...</SearchInput>
            <SearchBtn><Ic n="search" /></SearchBtn>
          </SearchRow>
          <ListBox>
            <Row $pl={9}>
              <ChevSlot><Chev open /></ChevSlot>
              <HDots $w={8} />
              <Ic n="rebar" />
              <Label>砌体加筋</Label>
            </Row>
            <Kids $ml={39} $plain>
              {["LJ-1", "LJ-2", "LJ-3", "LJ-4"].map((t, i) => (
                <KidRow key={t} $ml={0}>
                  {i === 0 ? (
                    <>
                      <Branch $w={11} />
                      <SelBar><Ic n="gear" s={15} /><Ascii $ls={0.7} $light>{t}</Ascii></SelBar>
                    </>
                  ) : (
                    <>
                      <Branch $w={16} $last={i === 3} />
                      <Ic n="gear" s={15} />
                      <Label $ml={8}><Ascii $ls={0.7}>{t}</Ascii></Label>
                    </>
                  )}
                </KidRow>
              ))}
            </Kids>
          </ListBox>
        </Middle>
        <Right>
          <ToolRow $h={34}>
            <Block $w={984}>
              <Grip />
              <Tools items={[{ i: "brush", t: "删除", w: 64, pl: 2 }]} />
              <Sep />
              <Tools items={[{ i: "copy", t: "复制", w: 65, g: 6 }, { i: "mirror", t: "镜像", w: 63 }]} />
              <Sep $mr={8} />
              <Tools items={[{ i: "move", t: "移动", w: 64 }, { i: "rotate", t: "旋转", w: 62, g: 4 }]} />
              <Sep />
              <Tools items={[{ i: "extend", t: "延伸", w: 64, off: true }, { i: "trim", t: "修剪", w: 63, off: true }]} />
              <Sep />
              <Tools items={[{ i: "break", t: "打断", w: 64, off: true }, { i: "merge", t: "合并", w: 62, off: true }, { i: "split", t: "分割", w: 65, off: true, g: 7 }]} />
              <Sep $mr={8} />
              <Tools items={[{ i: "align", t: "对齐", w: 72, g: 3, c: true, cr: 4 }, { i: "offset", t: "偏移", w: 64, off: true }, { i: "stretch", t: "拉伸", w: 63, off: true }]} />
              <Sep />
              <Tools items={[{ i: "setgrip", t: "设置夹点", w: 85, off: true }]} />
            </Block>
          </ToolRow>
          <ToolRow $h={36}>
            <Block $w={704}>
              <Grip />
              <Pick t="第1层" w={71} mr={2} pl={0} />
              <Pick t="墙" w={88} mr={2} pl={2} />
              <Pick t="砌体加筋" w={88} mr={2} pl={2} />
              <Pick t="LJ-1" w={88} pl={2} />
              <Sep $ml={5} $mr={4} />
              <Tools items={[
                { i: "prop", t: "属性", w: 62, pl: 4, mr: 5, on: true },
                { i: "edit", t: "编辑钢筋", w: 90 },
                { i: "list", t: "构件列表", w: 93, pl: 4, mr: 6, on: true },
                { i: "dropper", t: "拾取构件", w: 89, g: 4 },
              ]} />
            </Block>
            <Block $ml={3} $grow>
              <Grip $ml={4} $mr={6} />
              <Tools items={[
                { i: "two", t: "两点", w: 64 },
                { i: "parallel", t: "平行", w: 64 },
                { i: "angle", t: "点角", w: 77, c: true, cr: 8 },
                { i: "three", t: "三点辅轴", w: 109, c: true, cr: 8 },
                { i: "brush", t: "删除", w: 60 },
              ]} />
            </Block>
          </ToolRow>
          <ToolRow $h={33}>
            <Block $w={493}>
              <Grip />
              <Tools items={[{ i: "cursor", t: "选择", w: 80, pl: 6, g: 1, c: true, cr: 9 }]} />
              <Sep $mr={9} />
              <Tools items={[{ i: "point", t: "点", w: 47, g: 4 }, { i: "rotpt", t: "旋转点", w: 78 }]} />
              <Sep />
              <Tools items={[{ i: "smart", t: "智能布置", w: 103, c: true, cr: 10 }]} />
              <Sep />
              <Tools items={[{ i: "auto", t: "自动生成砌体加筋", w: 150 }]} />
            </Block>
            <Block $w={36} $ml={21} $flat><Grip /></Block>
          </ToolRow>
          <Canvas><Plan /></Canvas>
          <Bottom>
            <Block $grow>
              <Grip />
              <Tools items={[
                { i: "ortho", t: "正交", w: 61, pl: 2 },
                { i: "snap", t: "对象捕捉", w: 95, pl: 3, on: true, g: 7 },
                { i: "dyn", t: "动态输入", w: 92, pl: 3, on: true, g: 6 },
              ]} />
              <Grip $ml={9} $mr={6} />
              <Tools items={[
                { i: "cross", t: "交点", w: 59 },
                { i: "perp", t: "垂点", w: 61, pl: 4, mr: 1, on: true, g: 6 },
                { i: "mid", t: "中点", w: 65, pl: 6, mr: 5, on: true, g: 6 },
                { i: "vertex", t: "顶点", w: 63, g: 5 },
                { i: "coord", t: "坐标", w: 68, g: 5 },
              ]} />
              <Grip $ml={0} />
              <Pick t="不偏移" w={72} />
              <Sep $ml={5} $mr={3} />
              <GrayText $w={23}>X=</GrayText>
              <Spin $w={72}>0<Arrows /></Spin>
              <GrayText $w={36} $pl={3}>mm</GrayText>
              <GrayText $w={22}>Y=</GrayText>
              <Spin $w={72}>0<Arrows /></Spin>
              <GrayText $w={36} $pl={3}>mm</GrayText>
              <Sep $mr={3} />
              <Check />
              <PlainText $w={36}>旋转</PlainText>
              <Spin $w={80}>0.000<Arrows /></Spin>
            </Block>
          </Bottom>
          <SumBar>
            <CloseBox><Ic n="xclose" s={14} /></CloseBox>
            钢筋总重量（Kg）：180.121
          </SumBar>
          <TableArea>
            <Handle />
            <TableWrap>
              <Sheet>
                <Corner />
                <NameHead>构件名称</NameHead>
                <Head $rows={2}>钢筋总重里（<Ascii>Kg</Ascii>）</Head>
                <Head $cols={2} $center><Ascii $ls={-1}>HPB300</Ascii></Head>
                <Head $center><Ascii>6</Ascii></Head>
                <Head $center>合计</Head>
                {NAMES.map((n, i) => (
                  <React.Fragment key={n}>
                    <RowNo $sel={i === 0}>{i + 1}</RowNo>
                    <Cell $sel={i === 0}><Ascii $ls={0.7}>LJ-1{n}</Ascii></Cell>
                    <Cell><Ascii>{VALS[i]}</Ascii></Cell>
                    <Cell><Ascii>{VALS[i]}</Ascii></Cell>
                    <Cell><Ascii>{VALS[i]}</Ascii></Cell>
                  </React.Fragment>
                ))}
              </Sheet>
            </TableWrap>
          </TableArea>
        </Right>
      </Main>
      <Status>
        <StatusCell $w={185}><Ascii>X=-5349 Y=-63</Ascii></StatusCell>
        <StatusCell $w={97}>层高<Ascii>:3. 6m</Ascii></StatusCell>
        <StatusCell $w={122} $pl={1}>底标高<Ascii>:0. 78m</Ascii></StatusCell>
        <StatusCell $w={60}><Ascii>28</Ascii></StatusCell>
        <StatusCell $w={0} $grow $pl={1}>请按鼠标左键选择图元，或拉框选择，按右键中止或<Ascii $ls={-1.5}>ESC</Ascii>取消</StatusCell>
      </Status>
    </Page>
  );
}
